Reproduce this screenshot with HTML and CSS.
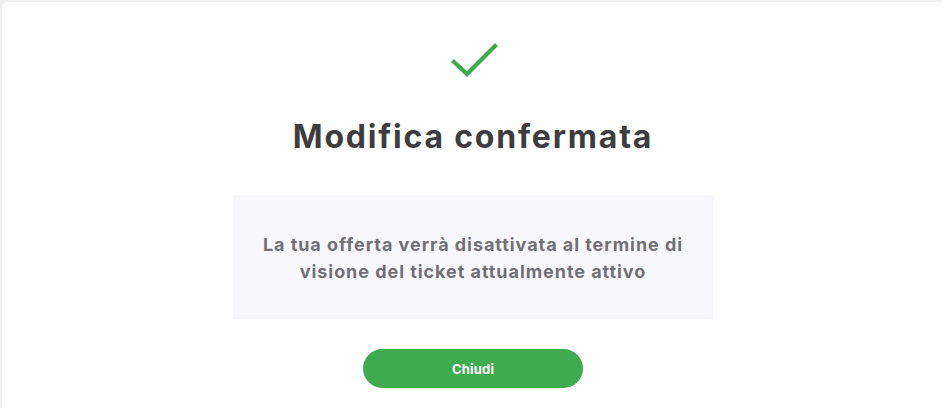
FILE: index.html
```html
<!DOCTYPE html>
<html lang="it">
<head>
<meta charset="utf-8">
<link rel="stylesheet" href="styles.css">
</head>
<body>
<div class="card">
  <svg class="check" width="48" height="36" viewBox="0 0 48 36">
    <path d="M3 20 L16 32 L44 4" fill="none" stroke="#3dab4b" stroke-width="4.2" stroke-linecap="square"/>
  </svg>
  <h1 class="title">Modifica confermata</h1>
  <div class="info">
    <p>La tua offerta verrà disattivata al termine di<br>visione del ticket attualmente attivo</p>
  </div>
  <button class="btn">Chiudi</button>
</div>
</body>
</html>
```
FILE: styles.css
```css
html, body {
  margin: 0;
  padding: 0;
  background: #efeff1;
  height: 100%;
  overflow: hidden;
}
body {
  padding: 2px 0 0 2px;
  box-sizing: border-box;
  font-family: Inter, "Noto Sans", sans-serif;
}
.card {
  background: #fff;
  border-radius: 5px 5px 0 0;
  width: 942px;
  height: 500px;
  display: flex;
  flex-direction: column;
  align-items: center;
  padding-top: 40px;
  box-sizing: border-box;
}
.check {
  display: block;
  margin-left: 4px;
}
.title {
  margin: 39px 0 0;
  font-size: 32px;
  font-weight: 700;
  color: #3d3d40;
  line-height: 40px;
  letter-spacing: 1.8px;
}
.info {
  margin-top: 38px;
  width: 480px;
  height: 124px;
  background: #f8f8fc;
  display: flex;
  align-items: center;
  justify-content: center;
}
.info p {
  margin: 0;
  text-align: center;
  font-size: 18px;
  font-weight: 700;
  line-height: 27px;
  color: #717075;
  letter-spacing: 0.95px;
  padding-top: 2px;
}
.btn {
  margin-top: 30px;
  width: 220px;
  height: 39px;
  border: none;
  border-radius: 20px;
  background: #3dab4e;
  color: #fff;
  font-family: inherit;
  font-size: 13px;
  font-weight: 700;
  letter-spacing: 0.2px;
}
```
